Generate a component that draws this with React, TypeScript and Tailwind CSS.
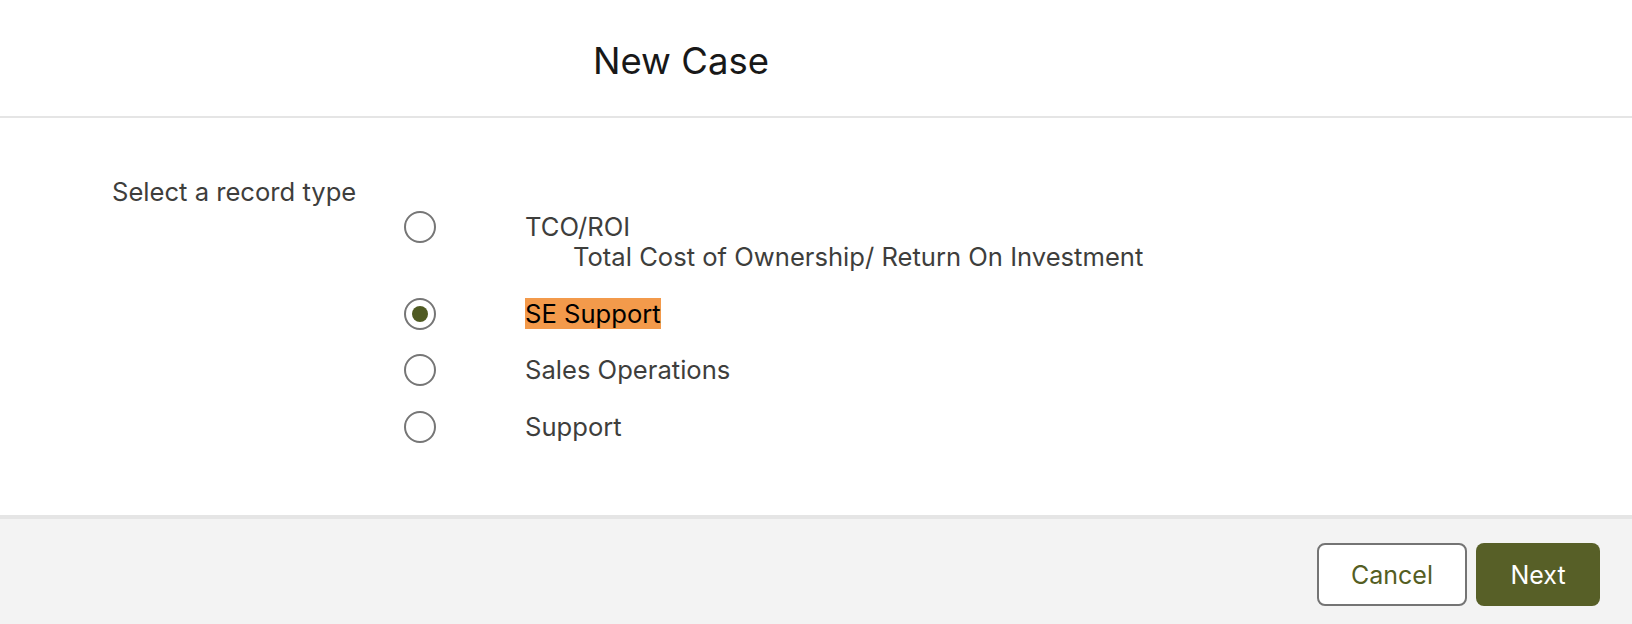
import React, { useState } from 'react';

const recordTypes = [
    { id: 'tco', label: 'TCO/ROI', description: 'Total Cost of Ownership/ Return On Investment' },
    { id: 'se', label: 'SE Support' },
    { id: 'salesops', label: 'Sales Operations' },
    { id: 'support', label: 'Support' },
];

function Radio({ checked }: { checked: boolean }) {
    return (
        <span className="flex h-[32px] w-[32px] shrink-0 items-center justify-center rounded-full border-2 border-[#767676] bg-white">
            {checked && <span className="h-[16px] w-[16px] rounded-full bg-[#4f5a22]" />}
        </span>
    );
}

export default function App() {
    const [selected, setSelected] = useState('se');

    return (
        <div className="flex h-[624px] w-full flex-col bg-white font-['Inter',sans-serif] text-[#3e3e3c]">
            {/* header */}
            <div className="h-[118px] shrink-0 border-b-2 border-[#e5e5e5] pl-[593px] pt-[39px]">
                <h1 className="text-[36.5px] leading-[44px] text-[#181818]">New Case</h1>
            </div>

            {/* body */}
            <div className="flex h-[397px] shrink-0 pl-[112px] pt-[59px]">
                <div className="w-[292px] shrink-0 text-[25.6px] leading-[30px]">Select a record type</div>
                <div className="mt-[34px] flex flex-col gap-[24px]">
                    {recordTypes.map((rt, i) => (
                        <label
                            key={rt.id}
                            className={`flex cursor-pointer items-start gap-[89px] ${rt.description ? 'mb-[2px]' : ''} ${
                                i === recordTypes.length - 1 ? 'mt-[1px]' : ''
                            }`}
                            onClick={() => setSelected(rt.id)}
                        >
                            <Radio checked={selected === rt.id} />
                            <div className="mt-[1px] text-[25.6px] leading-[30px]">
                                <div>
                                    <span className={selected === rt.id ? 'bg-[#f39a4b] text-black' : ''}>{rt.label}</span>
                                </div>
                                {rt.description && <div className="pl-[48px]">{rt.description}</div>}
                            </div>
                        </label>
                    ))}
                </div>
            </div>

            {/* footer */}
            <div className="flex flex-1 justify-end gap-[9px] border-t-4 border-[#e5e5e5] bg-[#f3f3f3] pr-[32px] pt-[24px]">
                <button className="h-[63px] w-[150px] rounded-[8px] border-2 border-[#747474] bg-white pt-[3px] text-[25px] text-[#545e23]">
                    Cancel
                </button>
                <button className="h-[63px] w-[124px] rounded-[8px] bg-[#575f27] pt-[3px] text-[25px] text-white">Next</button>
            </div>
        </div>
    );
}
